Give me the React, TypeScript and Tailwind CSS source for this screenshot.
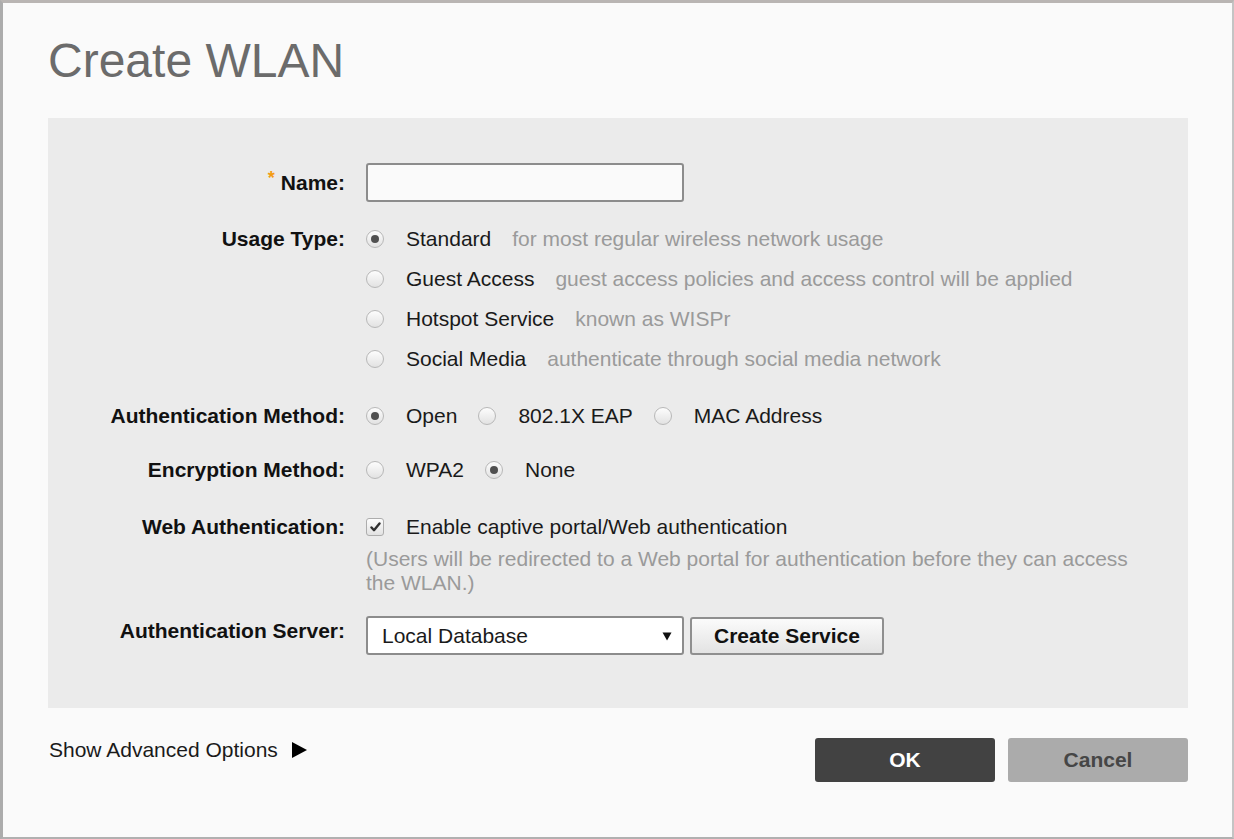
import React from "react";

type Option = { label: string; hint?: string; checked?: boolean };

function Radio({ checked }: { checked?: boolean }) {
  return (
    <span className="w-[18px] h-[18px] shrink-0 rounded-full border border-[#b8b8b8] bg-linear-to-b from-[#fdfdfd] to-[#e2e2e2] flex items-center justify-center">
      {checked && <span className="w-[8px] h-[8px] rounded-full bg-[#505050]" />}
    </span>
  );
}

function Checkbox() {
  return (
    <span className="w-[18px] h-[18px] shrink-0 rounded-[3px] border border-[#adadad] bg-linear-to-b from-[#fdfdfd] to-[#e2e2e2] flex items-center justify-center">
      <svg width="11" height="10" viewBox="0 0 11 10">
        <path d="M1.5 5.5 L4 8.2 L9.5 1.5" fill="none" stroke="#303030" strokeWidth="2.4" strokeLinecap="round" strokeLinejoin="round" />
      </svg>
    </span>
  );
}

function Label({ children, className = "" }: { children: React.ReactNode; className?: string }) {
  return (
    <div className={`w-[297px] shrink-0 flex items-center justify-end font-bold text-[#111] ${className}`}>
      {children}
    </div>
  );
}

export default function App() {
  const usageTypes: Option[] = [
    { label: "Standard", hint: "for most regular wireless network usage", checked: true },
    { label: "Guest Access", hint: "guest access policies and access control will be applied" },
    { label: "Hotspot Service", hint: "known as WISPr" },
    { label: "Social Media", hint: "authenticate through social media network" },
  ];
  const authMethods: Option[] = [
    { label: "Open", checked: true },
    { label: "802.1X EAP" },
    { label: "MAC Address" },
  ];
  const encryption: Option[] = [{ label: "WPA2" }, { label: "None", checked: true }];

  return (
    <div
      className="w-[1234px] h-[839px] bg-[#fafafa] border-t-[3px] border-l-[3px] border-r-2 border-b-2 border-t-[#b9b5b3] border-l-[#acacac] border-r-[#c4c4c4] border-b-[#b0b0b0] text-[21px] leading-[24px] text-[#1a1a1a]"
      style={{ fontFamily: '"Liberation Sans", Arial, sans-serif' }}
    >
      <div className="pl-[45px] pr-[44px]">
        {/* Title */}
        <h1 className="pt-[30px] text-[48px] leading-[55px] text-[#6b6b6b] font-normal">
          Create WLAN
        </h1>

        {/* Form panel */}
        <div className="mt-[30px] bg-[#ebebeb] flex flex-col pt-[45px] pb-[53px]">
          {/* Name */}
          <div className="flex gap-[21px] mb-[17px]">
            <Label className="h-[39px]">
              <span className="text-[#f39c12] font-bold text-[18px] mr-[6px] -mt-[9px]">*</span>
              Name:
            </Label>
            <input className="w-[318px] h-[39px] rounded-[3px] border-2 border-[#8c8c8c] bg-[#fafafa] outline-none" />
          </div>

          {/* Usage Type */}
          <div className="flex gap-[21px] mb-[17px]">
            <Label className="h-[40px]">Usage Type:</Label>
            <div className="flex flex-col">
              {usageTypes.map((o) => (
                <div key={o.label} className="h-[40px] flex items-center">
                  <Radio checked={o.checked} />
                  <span className="ml-[22px]">{o.label}</span>
                  <span className="ml-[21px] text-[#9a9a9a]">{o.hint}</span>
                </div>
              ))}
            </div>
          </div>

          {/* Authentication Method */}
          <div className="flex gap-[21px] mb-[14px]">
            <Label className="h-[40px]">Authentication Method:</Label>
            <div className="h-[40px] flex items-center gap-[21px]">
              {authMethods.map((o) => (
                <div key={o.label} className="flex items-center gap-[22px]">
                  <Radio checked={o.checked} />
                  <span>{o.label}</span>
                </div>
              ))}
            </div>
          </div>

          {/* Encryption Method */}
          <div className="flex gap-[21px] mb-[17px]">
            <Label className="h-[40px]">Encryption Method:</Label>
            <div className="h-[40px] flex items-center gap-[21px]">
              {encryption.map((o) => (
                <div key={o.label} className="flex items-center gap-[22px]">
                  <Radio checked={o.checked} />
                  <span>{o.label}</span>
                </div>
              ))}
            </div>
          </div>

          {/* Web Authentication */}
          <div className="flex gap-[21px] mb-[21px]">
            <Label className="h-[40px]">Web Authentication:</Label>
            <div className="flex flex-col">
              <div className="h-[40px] flex items-center gap-[22px]">
                <Checkbox />
                <span>Enable captive portal/Web authentication</span>
              </div>
              <p className="max-w-[780px] text-[#9a9a9a]">
                (Users will be redirected to a Web portal for authentication before they can access the WLAN.)
              </p>
            </div>
          </div>

          {/* Authentication Server */}
          <div className="flex gap-[21px]">
            <Label className="h-[30px]">Authentication Server:</Label>
            <div className="flex items-start gap-[6px]">
              <div className="w-[318px] h-[39px] rounded-[3px] border-2 border-[#8c8c8c] bg-white flex items-center justify-between pl-[14px] pr-[10px]">
                <span>Local Database</span>
                <svg width="10" height="10" viewBox="0 0 10 10">
                  <polygon points="0.5,1.5 9.5,1.5 5,9.5" fill="#111" />
                </svg>
              </div>
              <button className="w-[194px] h-[38px] mt-[1px] rounded-[3px] border-2 border-[#8f8f8f] bg-linear-to-b from-[#fbfbfb] to-[#e3e3e3] font-bold text-[#111] text-[21px]">
                Create Service
              </button>
            </div>
          </div>
        </div>

        {/* Footer */}
        <div className="flex justify-between items-start pt-[30px]">
          <div className="flex items-center pl-[1px]">
            <span>Show Advanced Options</span>
            <svg className="ml-[14px]" width="15" height="16" viewBox="0 0 15 16">
              <polygon points="0,0 15,8 0,16" fill="#000" />
            </svg>
          </div>
          <div className="flex gap-[13px]">
            <button className="w-[180px] h-[44px] rounded-[3px] bg-[#424242] text-white font-bold">OK</button>
            <button className="w-[180px] h-[44px] rounded-[3px] bg-[#ababab] text-[#464646] font-bold">Cancel</button>
          </div>
        </div>
      </div>
    </div>
  );
}
